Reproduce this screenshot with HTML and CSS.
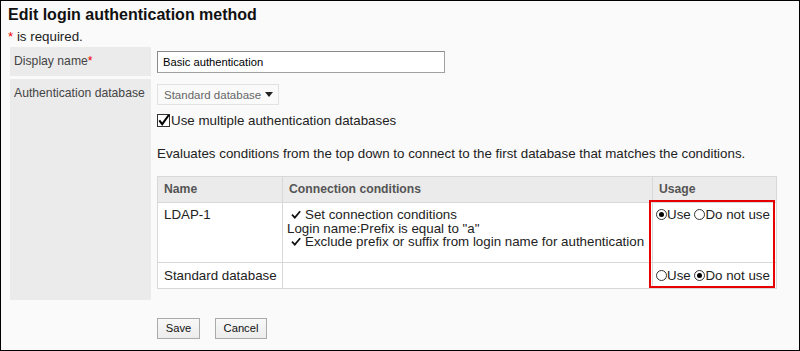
FILE: index.html
```html
<!DOCTYPE html>
<html>
<head>
<meta charset="utf-8">
<link rel="stylesheet" href="styles.css">
</head>
<body>
<div class="page">
  <h1 class="title">Edit login authentication method</h1>
  <div class="required"><span class="req">*</span> is required.</div>
  <div class="form">
    <div class="label row1">Display name<span class="req">*</span></div>
    <div class="field row1">
      <div class="input">Basic authentication</div>
    </div>
    <div class="label row2">Authentication database</div>
    <div class="field row2">
      <div class="select">Standard database <span class="caret"></span></div>
      <div class="check-line">
        <svg class="checkbox" width="13" height="13" viewBox="0 0 13 13">
          <rect x="0.5" y="0.5" width="12" height="12" fill="#fff" stroke="#333"/>
          <path d="M2.3 6.3 L5.2 10.2 L11.8 1" fill="none" stroke="#000" stroke-width="2"/>
        </svg>
        <span>Use multiple authentication databases</span>
      </div>
      <div class="desc">Evaluates conditions from the top down to connect to the first database that matches the conditions.</div>
      <div class="table-wrap">
        <table class="db">
          <tr class="head">
            <th class="c-name">Name</th>
            <th class="c-cond">Connection conditions</th>
            <th class="c-use">Usage</th>
          </tr>
          <tr class="r1">
            <td>LDAP-1</td>
            <td class="cond">
              <div class="cl"><svg class="tick" width="10" height="9" viewBox="0 0 10 9"><path d="M1 4.6 L3.8 7.6 L9.2 1.2" fill="none" stroke="#111" stroke-width="1.7"/></svg>Set connection conditions</div>
              <div class="cl">Login name:Prefix is equal to "a"</div>
              <div class="cl"><svg class="tick" width="10" height="9" viewBox="0 0 10 9"><path d="M1 4.6 L3.8 7.6 L9.2 1.2" fill="none" stroke="#111" stroke-width="1.7"/></svg>Exclude prefix or suffix from login name for authentication</div>
            </td>
            <td class="use">
              <span class="radio on"></span>Use <span class="radio"></span>Do not use
            </td>
          </tr>
          <tr class="r2">
            <td>Standard database</td>
            <td></td>
            <td class="use">
              <span class="radio"></span>Use <span class="radio on"></span>Do not use
            </td>
          </tr>
        </table>
        <div class="highlight"></div>
      </div>
    </div>
  </div>
  <div class="buttons">
    <div class="btn save">Save</div>
    <div class="btn cancel">Cancel</div>
  </div>
</div>
</body>
</html>
```
FILE: styles.css
```css
html, body {
  margin: 0;
  padding: 0;
}
body {
  font-family: "Liberation Sans", Arial, sans-serif;
  font-size: 13.33px;
  color: #222;
}
.page {
  width: 800px;
  height: 351px;
  box-sizing: border-box;
  border: 1px solid #000;
  background: #fafafa;
  padding: 0 0 0 7px;
}
.title {
  margin: 0;
  padding-top: 4px;
  font-size: 16px;
  line-height: 19px;
  font-weight: bold;
  color: #111;
}
.required {
  margin-top: 5px;
  line-height: 16px;
  color: #222;
}
.req {
  color: #e00;
}
.form {
  display: grid;
  grid-template-columns: 141px 1fr;
  column-gap: 6px;
  row-gap: 3px;
  margin-top: 2px;
  margin-left: 2px;
}
.label {
  background: #ebebeb;
  color: #444;
  font-size: 12.2px;
  padding: 6px 0 0 4px;
  line-height: 16px;
  white-space: nowrap;
  box-sizing: border-box;
}
.row1 {
  height: 29px;
  box-sizing: border-box;
}
.field.row1 {
  padding-top: 4px;
}
.input {
  width: 288px;
  height: 22px;
  box-sizing: border-box;
  border: 1px solid #a0a0a0;
  border-top-color: #8a8a8a;
  border-left-color: #8a8a8a;
  background: #fff;
  color: #000;
  font-size: 11.2px;
  padding: 3px 0 0 5px;
  line-height: 15px;
}
.label.row2 {
  height: 221px;
}
.field.row2 {
  padding-top: 5px;
}
.select {
  display: flex;
  align-items: center;
  width: 122px;
  height: 21px;
  box-sizing: border-box;
  border: 1px solid #e2e2e2;
  background: #fafafa;
  color: #666;
  font-size: 11.5px;
  padding: 0 0 0 6px;
  white-space: nowrap;
}
.caret {
  display: inline-block;
  width: 0;
  height: 0;
  border-left: 4px solid transparent;
  border-right: 4px solid transparent;
  border-top: 5px solid #222;
  margin-left: 4px;
}
.check-line {
  display: flex;
  align-items: center;
  margin-top: 7px;
  height: 16px;
  color: #222;
}
.checkbox {
  flex: none;
  margin-right: 1px;
}
.desc {
  margin-top: 18px;
  line-height: 16px;
  color: #222;
}
.table-wrap {
  position: relative;
  margin-top: 14px;
  width: 619px;
}
.db {
  border-collapse: collapse;
  width: 619px;
  table-layout: fixed;
  color: #222;
}
.db th, .db td {
  border: 1px solid #d8d8d8;
  padding: 0 6px;
  text-align: left;
  vertical-align: top;
  line-height: 16px;
  white-space: nowrap;
}
.db th {
  background: #ebebeb;
  color: #555;
  font-weight: bold;
  font-size: 12.2px;
  height: 26px;
  box-sizing: border-box;
  padding-top: 4px;
}
.db td {
  background: #fff;
}
.c-name { width: 125px; }
.c-cond { width: 370px; }
.c-use { width: 124px; }
.r1 td {
  height: 60px;
  box-sizing: border-box;
  padding-top: 4px;
}
.db td.cond {
  padding-left: 4px;
  padding-top: 5px;
}
.cl {
  line-height: 13.5px;
  white-space: nowrap;
}
.tick {
  margin-left: 4px;
  margin-right: 4px;
  vertical-align: 0;
}
.r2 td {
  height: 26px;
  box-sizing: border-box;
  padding-top: 5px;
}
.db td.use {
  padding-left: 3px;
  padding-right: 0;
}
.radio {
  display: inline-block;
  width: 11px;
  height: 11px;
  box-sizing: border-box;
  border: 1px solid #333;
  border-radius: 50%;
  background: #fff;
  vertical-align: -1px;
  position: relative;
}
.radio.on::after {
  content: "";
  position: absolute;
  left: 2px;
  top: 2px;
  width: 5px;
  height: 5px;
  border-radius: 50%;
  background: #000;
}
.highlight {
  position: absolute;
  left: 492px;
  top: 24px;
  width: 126px;
  height: 88px;
  box-sizing: border-box;
  border: 2px solid #e60000;
  pointer-events: none;
}
.buttons {
  display: flex;
  gap: 15px;
  margin-top: 18px;
  margin-left: 149px;
}
.btn {
  height: 21px;
  box-sizing: border-box;
  border: 1px solid #aaa;
  background: linear-gradient(#f8f8f8, #ececec);
  color: #111;
  font-size: 11.2px;
  line-height: 19px;
  text-align: center;
}
.save { width: 43px; }
.cancel { width: 52px; }
```
